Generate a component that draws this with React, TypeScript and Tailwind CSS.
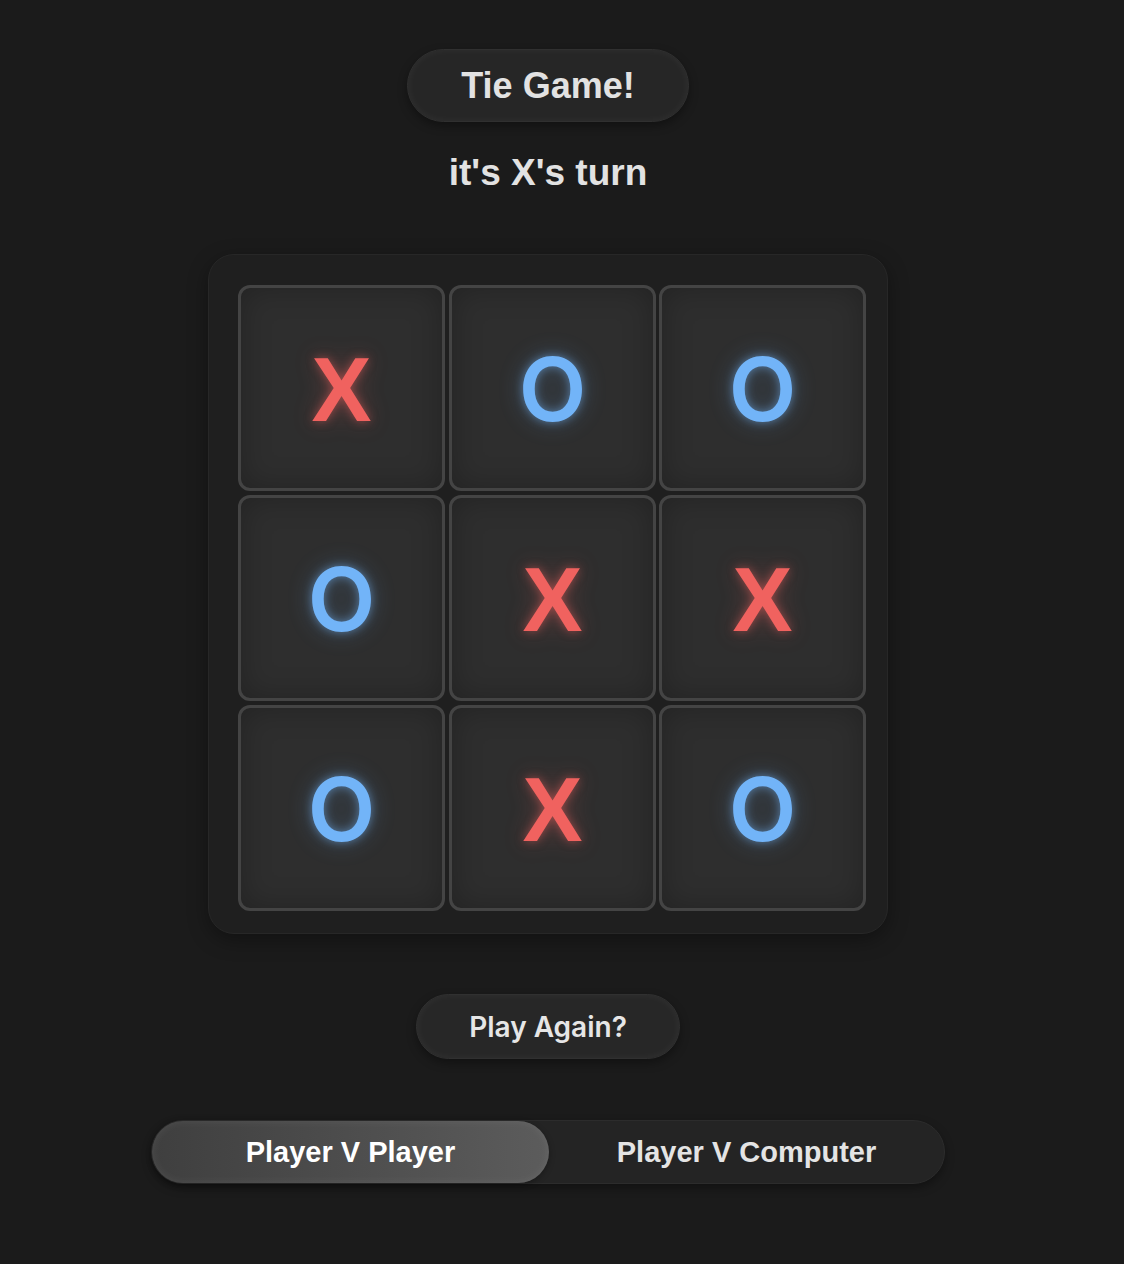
import React from 'react';

type Mark = 'X' | 'O';

const board: Mark[] = ['X', 'O', 'O', 'O', 'X', 'X', 'O', 'X', 'O'];

function Cell({ mark }: { mark: Mark }) {
  return (
    <div className="w-[207px] h-[206px] rounded-[12px] border-[3px] border-[#444444] bg-[#2e2e2e] shadow-[inset_0_0_30px_rgba(0,0,0,0.25)] flex items-center justify-center">
      {mark === 'X' ? (
        <span className="font-['Liberation_Sans',Arial,sans-serif] font-bold text-[90px] leading-none text-[#f0625f] [text-shadow:0_0_10px_rgba(240,98,95,0.5),0_0_24px_rgba(240,98,95,0.3)] mt-[4px]">
          X
        </span>
      ) : (
        <span className="font-['Inter','Liberation_Sans',sans-serif] font-semibold text-[88px] leading-none text-[#72b4f8] [text-shadow:0_0_10px_rgba(114,180,248,0.55),0_0_24px_rgba(114,180,248,0.3)] mt-[2px]">
          O
        </span>
      )}
    </div>
  );
}

export default function App() {
  return (
    <div className="min-h-[1264px] w-full bg-[#1b1b1b] flex flex-col items-center pt-[49px] pr-[28px] font-['Liberation_Sans',Arial,sans-serif]">
      <div className="w-[282px] h-[73px] rounded-full bg-[#262626] border border-[#303030] shadow-[0_4px_10px_rgba(0,0,0,0.35),inset_0_0_8px_rgba(255,255,255,0.05)] flex items-center justify-center">
        <h1 className="text-[36px] font-bold text-[#e2e2e2] leading-none">Tie Game!</h1>
      </div>

      <p className="mt-[29px] text-[37px] font-bold text-[#e2e2e2] leading-[44px]">it's X's turn</p>

      <div className="mt-[59px] w-[680px] h-[680px] rounded-[26px] bg-[#1f1f1f] border border-[#272727] shadow-[0_6px_20px_rgba(0,0,0,0.35)] pl-[29px] pt-[30px]">
        <div className="grid grid-cols-[207px_206px_206px] gap-[4px]">
          {board.map((m, i) => (
            <Cell key={i} mark={m} />
          ))}
        </div>
      </div>

      <button className="mt-[60px] w-[264px] h-[65px] rounded-full bg-[#272727] border border-[#303030] shadow-[0_4px_10px_rgba(0,0,0,0.35),inset_0_0_8px_rgba(255,255,255,0.05)] flex items-center justify-center">
        <span className="font-['Inter',sans-serif] font-semibold text-[28px] text-[#e6e6e6] leading-none">Play Again?</span>
      </button>

      <div className="mt-[61px] w-[794px] h-[64px] rounded-full bg-[#242424] border border-[#2c2c2c] shadow-[0_4px_10px_rgba(0,0,0,0.35)] flex">
        <button className="w-[397px] h-full rounded-full bg-gradient-to-r from-[#3f3f3f] to-[#5c5c5c] shadow-[inset_0_0_10px_rgba(255,255,255,0.08),0_2px_6px_rgba(0,0,0,0.3)] flex items-center justify-center">
          <span className="text-[29px] font-bold text-white leading-none">Player V Player</span>
        </button>
        <button className="flex-1 h-full flex items-center justify-center">
          <span className="text-[29px] font-bold text-[#e4e4e4] leading-none">Player V Computer</span>
        </button>
      </div>
    </div>
  );
}
